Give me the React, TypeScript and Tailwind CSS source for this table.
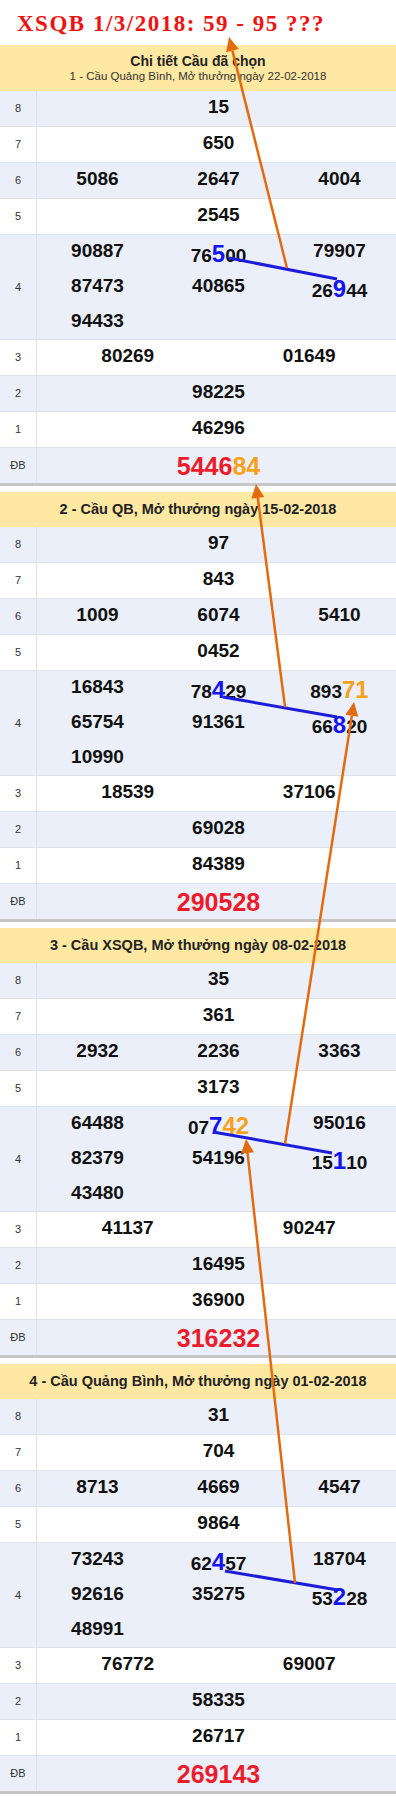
import React from 'react';

type Seg = { t: string; c?: 'b' | 'o' };

const parse = (s: string): Seg[] => {
  const out: Seg[] = [];
  const re = /\{([bo]):([^}]+)\}/g;
  let last = 0;
  let m: RegExpExecArray | null;
  while ((m = re.exec(s))) {
    if (m.index > last) out.push({ t: s.slice(last, m.index) });
    out.push({ t: m[2], c: m[1] as 'b' | 'o' });
    last = re.lastIndex;
  }
  if (last < s.length) out.push({ t: s.slice(last) });
  return out;
};

type Section = {
  title?: string;
  sub: string;
  r8: string;
  r7: string;
  r6: string[];
  r5: string;
  r4: string[][];
  r3: string[];
  r2: string;
  r1: string;
  db: string;
};

const sections: Section[] = [
  {
    title: 'Chi tiết Cầu đã chọn',
    sub: '1 - Cầu Quảng Bình, Mở thưởng ngày 22-02-2018',
    r8: '15',
    r7: '650',
    r6: ['5086', '2647', '4004'],
    r5: '2545',
    r4: [
      ['90887', '87473', '94433'],
      ['76{b:5}00', '40865'],
      ['79907', '26{b:9}44'],
    ],
    r3: ['80269', '01649'],
    r2: '98225',
    r1: '46296',
    db: '5446{o:84}',
  },
  {
    sub: '2 - Cầu QB, Mở thưởng ngày 15-02-2018',
    r8: '97',
    r7: '843',
    r6: ['1009', '6074', '5410'],
    r5: '0452',
    r4: [
      ['16843', '65754', '10990'],
      ['78{b:4}29', '91361'],
      ['893{o:71}', '66{b:8}20'],
    ],
    r3: ['18539', '37106'],
    r2: '69028',
    r1: '84389',
    db: '290528',
  },
  {
    sub: '3 - Cầu XSQB, Mở thưởng ngày 08-02-2018',
    r8: '35',
    r7: '361',
    r6: ['2932', '2236', '3363'],
    r5: '3173',
    r4: [
      ['64488', '82379', '43480'],
      ['07{b:7}{o:42}', '54196'],
      ['95016', '15{b:1}10'],
    ],
    r3: ['41137', '90247'],
    r2: '16495',
    r1: '36900',
    db: '316232',
  },
  {
    sub: '4 - Cầu Quảng Bình, Mở thưởng ngày 01-02-2018',
    r8: '31',
    r7: '704',
    r6: ['8713', '4669', '4547'],
    r5: '9864',
    r4: [
      ['73243', '92616', '48991'],
      ['62{b:4}57', '35275'],
      ['18704', '53{b:2}28'],
    ],
    r3: ['76772', '69007'],
    r2: '58335',
    r1: '26717',
    db: '269143',
  },
];

const BLUE_ROW = 'bg-[#eaeff9]';
const WHITE_ROW = 'bg-white';

function Label({ text }: { text: string }) {
  return (
    <div className="w-[37px] shrink-0 border-r border-[#dde3ec] flex items-center justify-center text-[11px] text-[#333]">
      {text}
    </div>
  );
}

function SimpleRow({ label, values, blue }: { label: string; values: string[]; blue: boolean }) {
  const cols = values.length === 3 ? 'grid-cols-3' : values.length === 2 ? 'grid-cols-2' : 'grid-cols-1';
  return (
    <div className={`flex h-[36px] border-b border-[#dde3ec] ${blue ? BLUE_ROW : WHITE_ROW}`}>
      <Label text={label} />
      <div className={`grid ${cols} w-[363px] text-[19px] font-bold leading-[32px] text-[#111] text-center`}>
        {values.map((v, i) => (
          <div key={i}>{v}</div>
        ))}
      </div>
    </div>
  );
}

function NumLine({ s }: { s: string }) {
  const segs = parse(s);
  const big = segs.some((g) => g.c);
  return (
    <div className="h-[35px] leading-[31px] text-center whitespace-nowrap">
      <span className={big ? 'relative top-[5px]' : ''}>
        {segs.map((g, i) =>
          g.c === 'b' ? (
            <span key={i} className="text-[24px] leading-none text-[#1414f0]">
              {g.t}
            </span>
          ) : g.c === 'o' ? (
            <span key={i} className="text-[24px] leading-none text-[#f8a21c]">
              {g.t}
            </span>
          ) : (
            <span key={i}>{g.t}</span>
          )
        )}
      </span>
    </div>
  );
}

function Row4({ cols }: { cols: string[][] }) {
  return (
    <div className={`flex h-[105px] border-b border-[#dde3ec] ${BLUE_ROW}`}>
      <Label text="4" />
      <div className="grid grid-cols-3 w-[363px] text-[19px] font-bold text-[#111]">
        {cols.map((c, i) => (
          <div key={i} className="flex flex-col">
            {c.map((s, j) => (
              <NumLine key={j} s={s} />
            ))}
          </div>
        ))}
      </div>
    </div>
  );
}

function DbRow({ value }: { value: string }) {
  const segs = parse(value);
  return (
    <div className={`flex h-[38px] border-b-[3px] border-[#c6c6c6] ${BLUE_ROW}`}>
      <Label text="ĐB" />
      <div className="w-[363px] text-center text-[25px] font-bold leading-[36px] text-[#ec1c2c]">
        {segs.map((g, i) => (
          <span key={i} className={g.c === 'o' ? 'text-[#f8a21c]' : ''}>
            {g.t}
          </span>
        ))}
      </div>
    </div>
  );
}

function SectionBlock({ s, first }: { s: Section; first: boolean }) {
  return (
    <div className={first ? '' : 'mt-[6px]'}>
      {s.title ? (
        <div className="h-[46px] bg-[#fee8a2] flex flex-col items-center justify-center text-center">
          <div className="text-[14px] font-bold leading-[16px] text-[#222]">{s.title}</div>
          <div className="text-[11.5px] leading-[15px] text-[#333]">{s.sub}</div>
        </div>
      ) : (
        <div className="h-[35px] bg-[#fee8a2] flex items-center justify-center text-[14.5px] font-bold text-[#222]">
          {s.sub}
        </div>
      )}
      <div className="w-[400px]">
        <SimpleRow label="8" values={[s.r8]} blue />
        <SimpleRow label="7" values={[s.r7]} blue={false} />
        <SimpleRow label="6" values={s.r6} blue />
        <SimpleRow label="5" values={[s.r5]} blue={false} />
        <Row4 cols={s.r4} />
        <SimpleRow label="3" values={s.r3} blue={false} />
        <SimpleRow label="2" values={[s.r2]} blue />
        <SimpleRow label="1" values={[s.r1]} blue={false} />
        <DbRow value={s.db} />
      </div>
    </div>
  );
}

type Pt = [number, number];

function Arrow({ from, to }: { from: Pt; to: Pt }) {
  const dx = to[0] - from[0];
  const dy = to[1] - from[1];
  const len = Math.hypot(dx, dy);
  const ux = dx / len;
  const uy = dy / len;
  const L = 14;
  const W = 6.5;
  const bx = to[0] - ux * L;
  const by = to[1] - uy * L;
  const px = -uy;
  const py = ux;
  const pts = `${to[0]},${to[1]} ${bx + px * W},${by + py * W} ${bx - px * W},${by - py * W}`;
  return (
    <g>
      <line x1={from[0]} y1={from[1]} x2={bx} y2={by} stroke="#e36a0e" strokeWidth={2.5} />
      <polygon points={pts} fill="#e36a0e" />
    </g>
  );
}

export default function App() {
  const blues: [Pt, Pt][] = [
    [[229, 258], [337, 279]],
    [[223, 697], [337, 717]],
    [[213, 1132], [332, 1153]],
    [[225, 1571], [338, 1590]],
  ];
  const arrows: [Pt, Pt][] = [
    [[287, 268], [229, 37]],
    [[285, 707], [256, 484]],
    [[285, 1144], [354, 702]],
    [[295, 1583], [246, 1139]],
  ];
  return (
    <div className="relative w-[396px] min-h-[1797px] overflow-hidden bg-white font-['Liberation_Sans',Arial,sans-serif]">
      <div className="h-[45px] pt-[3px] pl-[17px] leading-[42px] whitespace-nowrap font-['Liberation_Serif','Times_New_Roman',serif] text-[23px] font-bold tracking-[1.5px] text-[#f01212]">
        XSQB 1/3/2018: 59 - 95 ???
      </div>
      {sections.map((s, i) => (
        <SectionBlock key={i} s={s} first={i === 0} />
      ))}
      <svg
        className="absolute top-0 left-0 pointer-events-none"
        width={396}
        height={1797}
        viewBox="0 0 396 1797"
      >
        {blues.map(([a, b], i) => (
          <line key={i} x1={a[0]} y1={a[1]} x2={b[0]} y2={b[1]} stroke="#1d1dd8" strokeWidth={3} />
        ))}
        {arrows.map(([a, b], i) => (
          <Arrow key={i} from={a} to={b} />
        ))}
      </svg>
    </div>
  );
}
